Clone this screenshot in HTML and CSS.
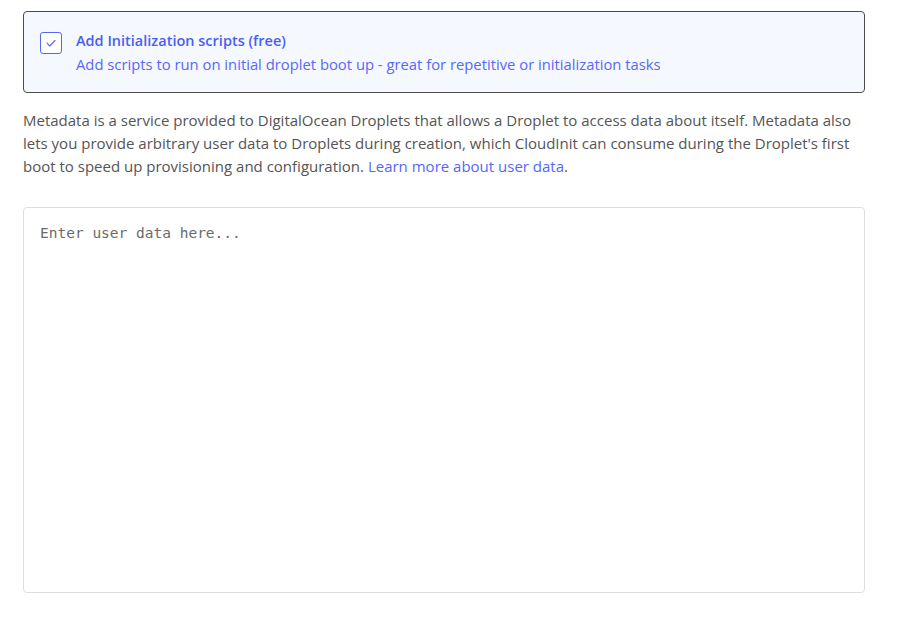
FILE: index.html
```html
<!DOCTYPE html>
<html lang="en">
<head>
<meta charset="utf-8">
<title>User data</title>
<link rel="stylesheet" href="styles.css">
</head>
<body>
<div class="page">
  <label class="option">
    <span class="checkbox">
      <svg width="12" height="10" viewBox="0 0 12 10"><path d="M2 5.2 L4.8 8 L10 2.5" fill="none" stroke="#5568f2" stroke-width="1.1" stroke-linecap="round" stroke-linejoin="round"/></svg>
    </span>
    <span class="option-text">
      <span class="option-title">Add Initialization scripts (free)</span>
      <span class="option-desc">Add scripts to run on initial droplet boot up - great for repetitive or initialization tasks</span>
    </span>
  </label>
  <p class="info">Metadata is a service provided to DigitalOcean Droplets that allows a Droplet to access data about itself. Metadata also lets you provide arbitrary user data to Droplets during creation, which CloudInit can consume during the Droplet's first boot to speed up provisioning and configuration. <a href="#">Learn more about user data</a>.</p>
  <textarea class="userdata" placeholder="Enter user data here..."></textarea>
</div>
</body>
</html>
```
FILE: styles.css
```css
* { box-sizing: border-box; }
html, body { margin: 0; padding: 0; background: #fff; }
body { font-family: "Open Sans", "Lato", sans-serif; }
.page {
  width: 842px;
  margin-left: 23px;
  padding-top: 11px;
  display: flex;
  flex-direction: column;
}
.option {
  display: flex;
  align-items: flex-start;
  gap: 14px;
  height: 82px;
  padding: 19px 16px 0 16px;
  border: 1px solid #4a4a4a;
  border-radius: 4px;
  background: #f5f8fe;
}
.checkbox {
  width: 22px;
  height: 22px;
  margin-top: 1px;
  border: 1px solid #5568f2;
  border-radius: 3px;
  background: #fff;
  display: flex;
  align-items: center;
  justify-content: center;
  flex: none;
}
.option-text { display: flex; flex-direction: column; }
.option-title {
  font-size: 14.5px;
  font-weight: 600;
  color: #4a5ff0;
  line-height: 20px;
}
.option-desc {
  font-size: 14.8px;
  color: #5a68f6;
  line-height: 20px;
  margin-top: 3px;
}
.info {
  margin: 16px 0 0 0;
  max-width: 836px;
  font-size: 15px;
  line-height: 23px;
  color: #555;
}
.info a { color: #5468f8; text-decoration: none; }
.userdata {
  margin-top: 29px;
  width: 842px;
  height: 386px;
  border: 1px solid #ddd;
  border-radius: 4px;
  padding: 16px;
  resize: none;
  font-family: "DejaVu Sans Mono", monospace;
  font-size: 14.5px;
  line-height: 18px;
  color: #444;
  outline: none;
}
.userdata::placeholder { color: #6b6b6b; }
```
